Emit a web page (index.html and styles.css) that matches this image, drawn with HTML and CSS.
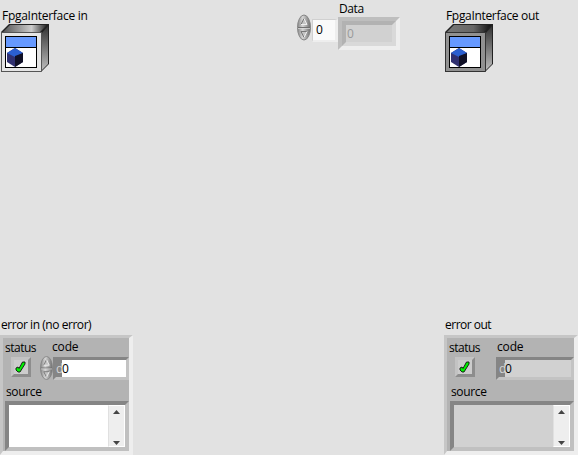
FILE: index.html
```
<!DOCTYPE html>
<html lang="en">
<head>
<meta charset="utf-8">
<title>FPGA Interface</title>
<link rel="stylesheet" href="styles.css">
</head>
<body>
<svg class="defs" width="0" height="0" aria-hidden="true">
  <defs>
    <linearGradient id="topface"><stop offset="0" stop-color="#555"/><stop offset=".65" stop-color="#ccc"/><stop offset="1" stop-color="#222"/></linearGradient>
    <linearGradient id="topdark"><stop offset="0" stop-color="#777"/><stop offset=".6" stop-color="#666"/><stop offset="1" stop-color="#111"/></linearGradient>
    <linearGradient id="side" x2="0" y2="1"><stop offset="0" stop-color="#333"/><stop offset="1" stop-color="#bbb"/></linearGradient>
    <linearGradient id="knob"><stop offset="0" stop-color="#888"/><stop offset=".4" stop-color="#d5d5d5"/><stop offset="1" stop-color="#6d6d6d"/></linearGradient>
    <symbol id="screen" viewBox="0 0 35 35">
      <path fill="#000" d="M1 1h32v32H1z"/><path fill="#fff" d="M2 2h30v30H2z"/>
      <path fill="#6699ff" d="M2 2h30v10H2z"/><path fill="#000" d="M2 12h30v1H2z"/>
      <path fill="#303070" d="M3 18l8-5 8 5v9l-8 5-8-5z"/>
      <path fill="#2b5fd0" d="M3 18l8-5 8 5-8 4z"/><path fill="#101026" d="M11 21l8-3v9l-8 5z"/>
    </symbol>
    <symbol id="spinner" viewBox="0 0 14 26">
      <ellipse cx="7" cy="13" rx="6.5" ry="12.5" fill="url(#knob)" stroke="#858585"/>
      <path d="M1 13h12" stroke="#707070"/><path d="M1 14h12" stroke="#ddd" stroke-width=".7"/>
      <path d="M4 10l3-6 3 6z" fill="#c4c4c4"/><path d="M4 10l3-6" stroke="#777"/><path d="M7 4l3 6H4" fill="none" stroke="#eee"/>
      <path d="M4 17h6l-3 6z" fill="#c4c4c4"/><path d="M10 17H4l3 6" fill="none" stroke="#777"/><path d="M10 17l-3 6" stroke="#eee"/>
    </symbol>
    <symbol id="check" viewBox="0 0 11 12">
      <path d="M1 7l2-1 1 1.5L7.5 1H10v2L5 11H3L1 9z" fill="#00f000" stroke="#111" stroke-width=".9"/>
    </symbol>
    <symbol id="up" viewBox="0 0 7 4"><path d="M0 4l3.5-4L7 4z" fill="#444"/></symbol>
    <symbol id="down" viewBox="0 0 7 4"><path d="M0 0h7L3.5 4z" fill="#444"/></symbol>
  </defs>
</svg>
<main class="panel">
  <section class="top">
    <div class="ref">
      <div class="label ref-in">FpgaInterface in</div>
      <svg class="ref-icon" viewBox="0 0 48 48">
        <path d="M0 8L8 0h40v40l-8 8H0z" fill="#222"/>
        <path d="M2 8l7-7h37l-7 7z" fill="url(#topface)"/><path d="M41 9l6-7v38l-6 6z" fill="url(#side)"/>
        <path d="M.5 8.5h40v39H.5z" fill="#e5e5e5" stroke="#555"/>
        <use href="#screen" x="3" y="11" width="35" height="35"/>
      </svg>
    </div>
    <div class="array">
      <div class="label data-label">Data</div>
      <div class="array-row">
        <svg class="spin"><use href="#spinner"/></svg>
        <div class="index">0</div>
        <div class="element"><div class="element-value">0</div></div>
      </div>
    </div>
    <div class="ref">
      <div class="label ref-out">FpgaInterface out</div>
      <svg class="ref-icon" viewBox="0 0 48 48">
        <path d="M0 8L8 0h40v40l-8 8H0z" fill="#222"/>
        <path d="M2 8l7-7h37l-7 7z" fill="url(#topdark)"/><path d="M41 9l6-7v38l-6 6z" fill="url(#side)"/>
        <path d="M.5 8.5h40v39H.5z" fill="#919191" stroke="#333"/>
        <use href="#screen" x="3" y="11" width="35" height="35"/>
      </svg>
    </div>
  </section>
  <section class="bottom">
    <div class="error in">
      <div class="label error-in">error in (no error)</div>
      <div class="cluster">
        <div class="names"><span class="status">status</span><span class="code">code</span></div>
        <div class="values">
          <div class="led"><svg><use href="#check"/></svg></div>
          <svg class="spin small"><use href="#spinner"/></svg>
          <div class="number"><span class="radix">d</span><span class="digits">0</span></div>
        </div>
        <div class="source">source</div>
        <div class="text"><div class="scroll"><svg><use href="#up"/></svg><svg><use href="#down"/></svg></div></div>
      </div>
    </div>
    <div class="error out">
      <div class="label error-out">error out</div>
      <div class="cluster">
        <div class="names"><span class="status">status</span><span class="code">code</span></div>
        <div class="values">
          <div class="led"><svg><use href="#check"/></svg></div>
          <div class="number"><span class="radix">d</span><span class="digits">0</span></div>
        </div>
        <div class="source">source</div>
        <div class="text"><div class="scroll"><svg><use href="#up"/></svg><svg><use href="#down"/></svg></div></div>
      </div>
    </div>
  </section>
</main>
</body>
</html>
```
FILE: styles.css
```
* { box-sizing: border-box; }
body { margin: 0; background: #e2e2e2; color: #000; font: 12px/16px "Open Sans", "Noto Sans", sans-serif; overflow: hidden; }
svg { display: block; }
.defs { position: absolute; }
.panel { width: 578px; height: 455px; display: flex; flex-direction: column; justify-content: space-between; }
.top { display: grid; grid-template-columns: 297px 148px 133px; }
.ref { padding: 8px 0 0 1px; }
.array + .ref { padding-left: 0; }
.label { height: 16px; white-space: nowrap; }
.ref .label { padding-left: 1px; }
.ref-in { letter-spacing: -.28px; }
.ref-out { letter-spacing: -.33px; }
.ref-icon { width: 48px; height: 48px; }
.data-label { margin: 1px 0 0 42px; letter-spacing: -.4px; }
.array-row { display: flex; align-items: flex-start; }
.spin { width: 14px; height: 27px; margin-top: -3px; }
.index { width: 26px; height: 23px; margin: 2px 0 0 1px; padding-left: 3px; line-height: 20px; background: #fafafa; border: 1px solid; border-width: 1px 3px 2px 1px; border-color: #d0d0d0 #eee #eee #d0d0d0; }
.element { width: 62px; height: 33px; border: 4px solid; border-color: #bebebe #eee #eee #bebebe; }
.element-value { height: 25px; border: 4px solid; border-color: #b2b2b2 #d9d9d9 #d9d9d9 #b2b2b2; background: #d1d1d1; color: #999; padding-left: 1px; line-height: 17px; }
.bottom { display: flex; justify-content: space-between; }
.error { width: 133px; }
.error.out { width: 134px; }
.error .label { height: 18px; padding-left: 1px; }
.error-in { letter-spacing: -.45px; }
.error-out { letter-spacing: -.5px; }
.cluster { height: 120px; padding: 1px 0 0 2px; background: #b3b3b3; border: 3px solid; border-width: 3px 4px 4px 3px; border-color: #c6c6c6 #eee #eee #c6c6c6; }
.names { height: 18px; display: flex; }
.status { width: 47px; padding-top: 1px; letter-spacing: -.5px; }
.code { letter-spacing: -.15px; }
.names .code { padding-top: 0; }
.values { height: 23px; display: flex; }
.led { width: 20px; height: 20px; margin: 0 1px 0 6px; padding: 1px 0 0 1px; background: #ccc; border: 3px solid; border-color: #c3c3c3 #8d8d8d #8d8d8d #c3c3c3; }
.led svg { width: 11px; height: 12px; }
.small { width: 13px; height: 24px; margin: -1px 0 0 8px; }
.number { width: 76px; height: 23px; display: flex; border: 3px solid; border-color: #858585 #c3c3c3 #c3c3c3 #858585; background: #fff; line-height: 18px; }
.radix { width: 6px; background: #858585; color: #d5d5d5; overflow: hidden; }
.source { height: 21px; margin-left: 1px; padding-top: 4px; letter-spacing: -.35px; }
.text { width: 124px; height: 50px; border: 4px solid; border-color: #858585 #c0c0c0 #c0c0c0 #858585; background: #fff; display: flex; justify-content: flex-end; }
.scroll { width: 17px; background: #eee; border: 1px solid #fff; border-left-color: #e0e0e0; display: flex; flex-direction: column; align-items: center; justify-content: space-between; padding: 4px 0 1px; }
.scroll svg { width: 7px; height: 4px; }
.out .status { width: 48px; }
.out .number { margin-left: 20px; width: 78px; background: #d1d1d1; }
.out .text { margin-left: 1px; background: #d1d1d1; }
.out .source { margin-left: 2px; }
```
